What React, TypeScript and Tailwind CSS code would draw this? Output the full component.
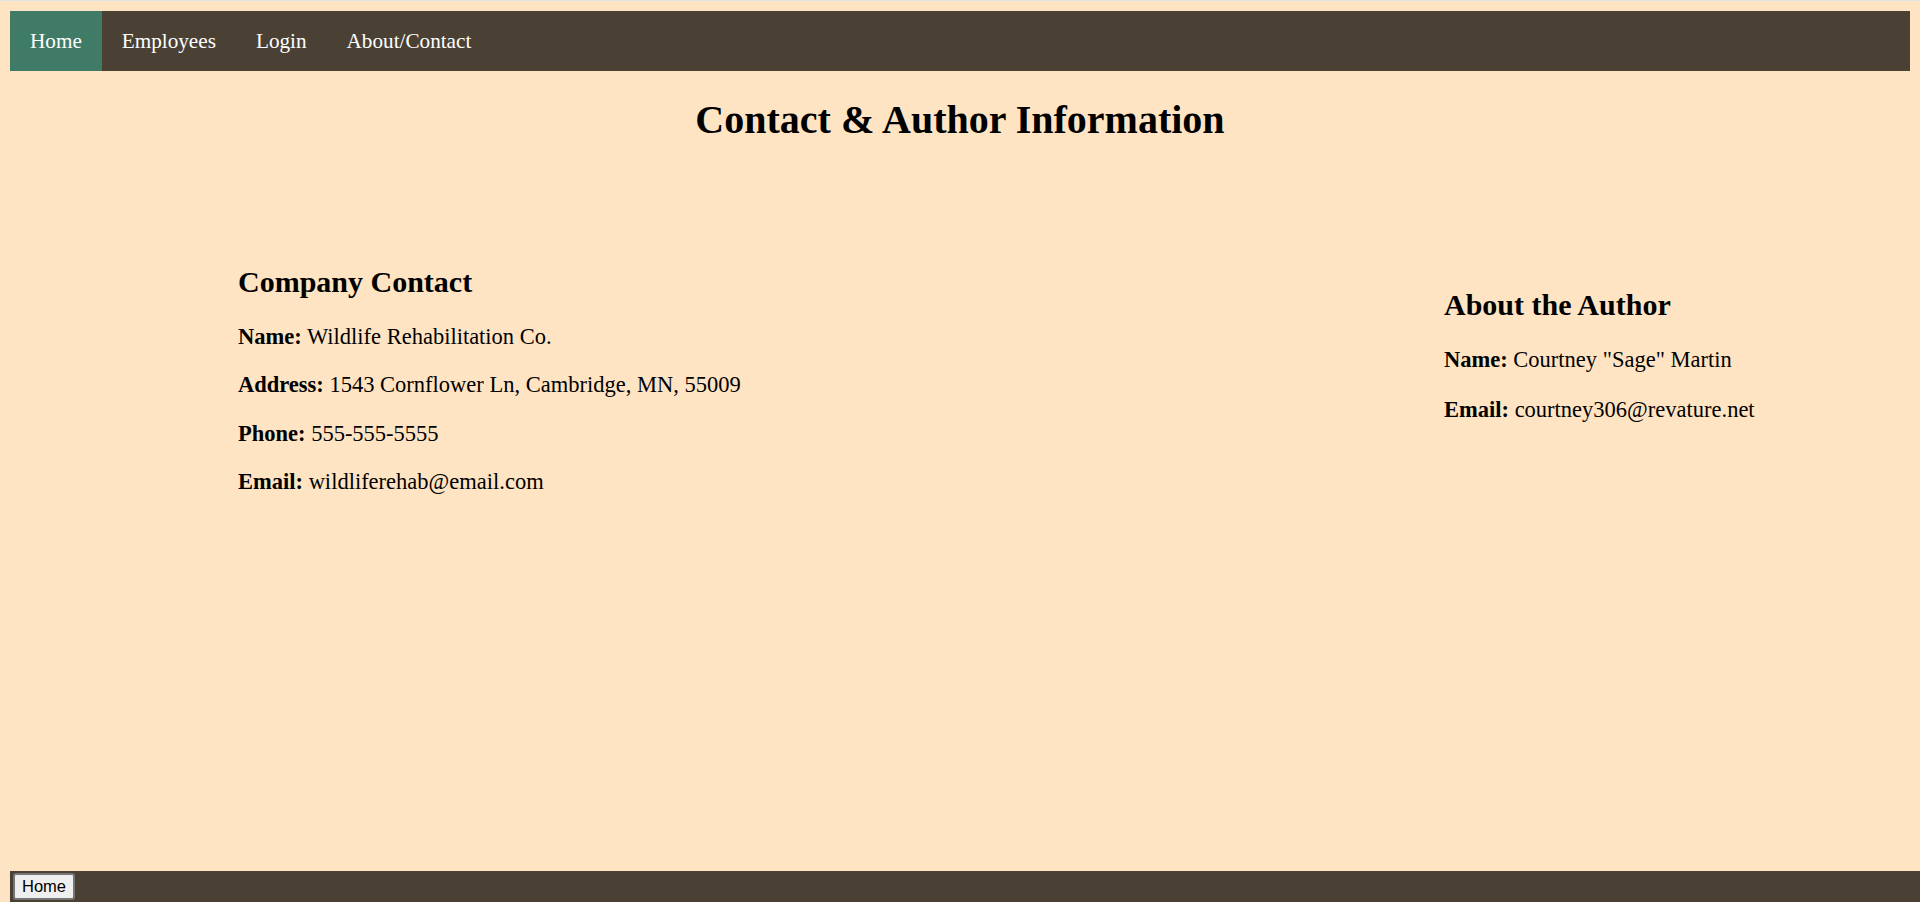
import React from "react";

const serif = { fontFamily: '"Liberation Serif", "Times New Roman", serif' };

function Field({ label, value }: { label: string; value: string }) {
  return (
    <p className="text-[22.5px] leading-[23px] text-black">
      <b className="font-bold">{label}</b> {value}
    </p>
  );
}

export default function App() {
  return (
    <div
      className="h-[902px] w-[1920px] overflow-hidden bg-[#ffe4c4] flex flex-col font-['Liberation_Serif','Times_New_Roman',serif]"
      style={serif}
    >
      <div className="h-px w-full bg-[#dfe3e6]" />
      <nav className="mt-[10px] ml-[10px] mr-[10px] h-[60px] bg-[#4a4134] flex items-stretch">
        <a className="flex items-center px-[20px] bg-[#3f7b66] text-white text-[21.2px] leading-[23px]">Home</a>
        <a className="flex items-center px-[20px] text-white text-[21.2px] leading-[23px]">Employees</a>
        <a className="flex items-center px-[20px] text-white text-[21.2px] leading-[23px]">Login</a>
        <a className="flex items-center px-[20px] text-white text-[21.2px] leading-[23px]">About/Contact</a>
      </nav>

      <h1 className="mt-[26px] ml-[10px] mr-[10px] text-center text-[40px] leading-[46px] font-bold text-black">
        Contact &amp; Author Information
      </h1>

      <div className="mt-[122px] ml-[238px] mr-[10px] flex items-start">
        <section className="w-[1206px] flex flex-col">
          <h2 className="text-[30px] leading-[34.5px] font-bold text-black mb-[25.5px]">Company Contact</h2>
          <div className="flex flex-col gap-[25.3px]">
            <Field label="Name:" value="Wildlife Rehabilitation Co." />
            <Field label="Address:" value="1543 Cornflower Ln, Cambridge, MN, 55009" />
            <Field label="Phone:" value="555-555-5555" />
            <Field label="Email:" value="wildliferehab@email.com" />
          </div>
        </section>
        <section className="mt-[23px] flex flex-col">
          <h2 className="text-[30px] leading-[34.5px] font-bold text-black mb-[25.5px]">About the Author</h2>
          <div className="flex flex-col gap-[26.5px]">
            <Field label="Name:" value={'Courtney "Sage" Martin'} />
            <Field label="Email:" value="courtney306@revature.net" />
          </div>
        </section>
      </div>

      <footer className="mt-auto ml-[10px] h-[31px] bg-[#4a4134] flex items-start pt-[2px] pl-[3px]">
        <button className="h-[27px] px-[7px] bg-[#efefef] border-2 border-[#767676] rounded-[3px] text-[16.5px] leading-[19px] text-black font-['Liberation_Sans',Arial,sans-serif]">
          Home
        </button>
      </footer>
    </div>
  );
}
